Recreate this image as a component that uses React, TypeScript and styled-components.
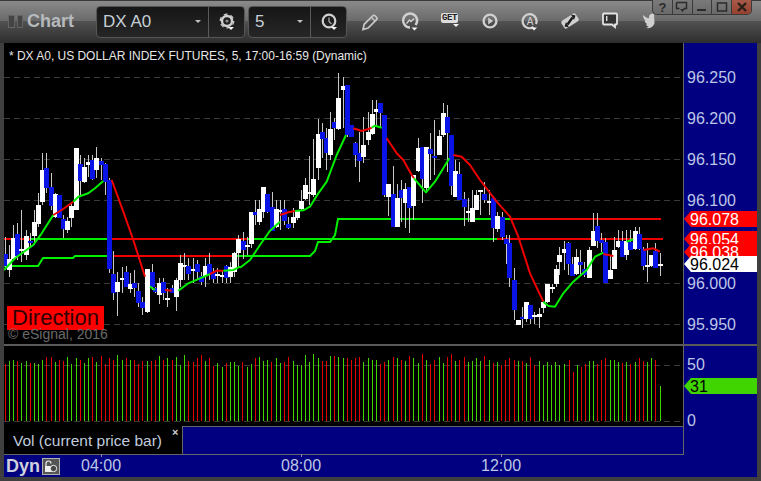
import React from "react";
import styled, { createGlobalStyle } from "styled-components";

const FONT = `"Liberation Sans", Arial, sans-serif`;
const AXIS_TEXT = "#bcc6e6";
const NAVY = "#000080";
const RULE = "#666666";

const Global = createGlobalStyle`
  html, body { margin: 0; padding: 0; background: #3c3c3c; overflow: hidden; }
  #root { width: 761px; height: 481px; }
`;

const Windowed = styled.div`
  position: relative;
  width: 761px;
  height: 481px;
  display: flex;
  flex-direction: column;
  background: #3f3f3f;
  font-family: ${FONT};
`;

const TitleBar = styled.header`
  height: 43px;
  flex: none;
  display: flex;
  align-items: center;
  background: linear-gradient(
    #3a3a3a 0,
    #3a3a3a 1px,
    #8a8a8a 1px,
    #6a6a6a 21px,
    #525252 21px,
    #2d2d2d 43px
  );
`;

const Grip = styled.div`
  width: 15px;
  margin-left: 8px;
  display: flex;
  gap: 2px;
`;

const GripBar = styled.span`
  width: 5px;
  height: 11px;
  border: 1px solid #646464;
  background: #444444;
`;

const AppName = styled.div`
  margin-left: 4px;
  width: 69px;
  font-size: 18px;
  font-weight: bold;
  color: #b6babd;
`;

const Combo = styled.div<{ $w: number; $split: number }>`
  width: ${(p) => p.$w}px;
  height: 32px;
  box-sizing: border-box;
  margin-right: 3px;
  display: grid;
  grid-template-columns: ${(p) => p.$split}px 1fr;
  border: 1px solid #565656;
  border-radius: 4px;
  background: linear-gradient(#161616, #262626);
`;

const ComboField = styled.div`
  display: flex;
  align-items: center;
  justify-content: space-between;
  padding: 0 7px 0 6px;
  border-right: 1px solid #5a5a5a;
  font-size: 17px;
  color: #c6ced6;
`;

const ComboCaret = styled.span`
  width: 0;
  height: 0;
  border-left: 3px solid transparent;
  border-right: 3px solid transparent;
  border-top: 3px solid #c0c0c0;
`;

const ComboIcon = styled.div`
  display: flex;
  align-items: center;
  justify-content: center;
`;

const IconSlot = styled.div`
  width: 40px;
  height: 24px;
  flex: none;
  display: flex;
  justify-content: center;
  position: relative;
`;

const GetBadge = styled.span`
  position: absolute;
  left: 11px;
  top: 3px;
  width: 17px;
  height: 10px;
  border-radius: 2px;
  background: #dcdcdc;
  color: #222;
  font: bold 9px/10px "Liberation Mono", monospace;
  text-align: center;
  letter-spacing: -0.4px;
`;

const WindowControls = styled.div`
  position: absolute;
  top: 0;
  left: 652px;
  width: 100px;
  height: 15px;
  box-sizing: border-box;
  display: flex;
  border: 1px solid #3a3a3a;
  border-top: 0;
  border-radius: 0 0 5px 5px;
  overflow: hidden;
  background: linear-gradient(#7a7a7a, #6a6a6a);
`;

const WindowButton = styled.div<{ $close?: boolean }>`
  flex: 1;
  display: flex;
  align-items: center;
  justify-content: center;
  border-left: 1px solid #3a3a3a;
  font-size: 13px;
  font-weight: bold;
  color: #2b2b2b;
  background: ${(p) => (p.$close ? "linear-gradient(#a85a48, #96402f)" : "transparent")};
  &:first-child {
    border-left: 0;
  }
`;

const Body = styled.main`
  flex: 1;
  display: flex;
  flex-direction: column;
  padding: 0 4px 4px;
`;

const PriceRow = styled.section`
  height: 301px;
  flex: none;
  display: flex;
`;

const Plot = styled.div`
  position: relative;
  width: 679px;
  flex: none;
  background: #000;
  svg {
    display: block;
  }
`;

const PlotTitle = styled.div`
  position: absolute;
  left: 5px;
  top: 6px;
  font-size: 12px;
  line-height: 14px;
  letter-spacing: -0.02px;
  color: #e6e6e6;
  white-space: nowrap;
`;

const Direction = styled.div`
  position: absolute;
  left: 3px;
  top: 263px;
  width: 97px;
  height: 24px;
  background: #ff0000;
  color: #300000;
  font-size: 22px;
  line-height: 24px;
  text-align: center;
`;

const Copyright = styled.div`
  position: absolute;
  left: 4px;
  top: 284px;
  font-size: 14px;
  line-height: 15px;
  color: #6a6a6a;
  white-space: nowrap;
`;

const Axis = styled.aside`
  position: relative;
  width: 74px;
  flex: none;
  box-sizing: border-box;
  border-left: 1px solid ${RULE};
  background: ${NAVY};
  overflow: hidden;
`;

const AxisLabel = styled.div<{ $y: number }>`
  position: absolute;
  left: 3px;
  top: ${(p) => p.$y - 9}px;
  font-size: 16px;
  line-height: 18px;
  color: ${AXIS_TEXT};
`;

const PriceTag = styled.div<{ $top: number; $h: number; $bg: string; $fg: string }>`
  position: absolute;
  left: 0;
  right: 0;
  top: ${(p) => p.$top}px;
  height: ${(p) => p.$h}px;
  padding-left: 6px;
  background: ${(p) => p.$bg};
  color: ${(p) => p.$fg};
  font-size: 16px;
  line-height: 17px;
  overflow: hidden;
  clip-path: polygon(7px 0, 100% 0, 100% 100%, 7px 100%, 0 50%);
`;

const Separator = styled.div`
  height: 2px;
  flex: none;
  background: #5a5a5a;
`;

const LowerRow = styled.section`
  height: 109px;
  flex: none;
  display: flex;
`;

const LowerLeft = styled.div`
  width: 679px;
  flex: none;
  display: flex;
  flex-direction: column;
`;

const VolPlot = styled.div`
  height: 80px;
  flex: none;
  background: #000;
  svg {
    display: block;
  }
`;

const LegendRow = styled.div`
  height: 29px;
  flex: none;
  box-sizing: border-box;
  display: flex;
  border-bottom: 1px solid ${RULE};
`;

const LegendTab = styled.div`
  width: 178px;
  flex: none;
  box-sizing: border-box;
  position: relative;
  padding: 6px 0 0 9px;
  background: #000;
  color: #c0cbdc;
  font-size: 15.5px;
  line-height: 18px;
  white-space: nowrap;
`;

const LegendClose = styled.span`
  position: absolute;
  left: 168px;
  top: 0;
  font-size: 11px;
  line-height: 12px;
  font-weight: bold;
  color: #d0d0d0;
`;

const LegendRest = styled.div`
  flex: 1;
  background: ${NAVY};
  border-top: 1px solid ${RULE};
  border-left: 1px solid ${RULE};
`;

const TimeAxis = styled.footer`
  flex: 1;
  display: flex;
  align-items: center;
  background: ${NAVY};
`;

const Dyn = styled.div`
  width: 38px;
  flex: none;
  padding-left: 2px;
  box-sizing: border-box;
  font-size: 18px;
  font-weight: bold;
  color: #cfd2dc;
`;

const LockBox = styled.div`
  width: 18px;
  height: 17px;
  flex: none;
  box-sizing: border-box;
  border: 1px solid #b0b0b0;
  background: #555;
  display: flex;
  align-items: center;
  justify-content: center;
`;

const TimeLabels = styled.div`
  margin-left: 21px;
  display: flex;
  gap: 160px;
`;

const TimeLabel = styled.div`
  position: relative;
  width: 40px;
  text-align: center;
  font-size: 16px;
  line-height: 18px;
  color: ${AXIS_TEXT};
  &::before {
    content: "";
    position: absolute;
    left: 20px;
    top: -3px;
    width: 1px;
    height: 3px;
    background: #8a8aa8;
  }
`;

/* ---------- chart data (read off the picture) ---------- */

type C = [number, number, number, number, number, "w" | "b"];

const c3: C[] = [
  [15,322,372,408,420,"b"],[27,345,388,420,440,"w"],[39,285,325,388,390,"w"],[52,280,312,378,390,"b"],
  [64,240,357,362,395,"w"],[78,300,318,375,390,"w"],[90,310,333,338,350,"b"],[103,240,276,318,345,"w"],
  [115,190,225,282,290,"w"],[127,70,120,216,225,"w"],[139,68,114,174,190,"b"],[154,130,172,228,240,"b"],
  [166,190,192,262,265,"w"],[178,195,195,263,265,"b"],[190,255,267,297,325,"b"],[202,260,273,300,310,"w"],
  [214,215,228,264,290,"w"],[229,54,54,240,240,"w"],[241,75,102,153,200,"b"],[253,85,110,156,160,"w"],
  [265,75,96,104,140,"w"],[277,75,90,147,150,"b"],[289,50,84,120,145,"w"],[304,85,94,106,150,"b"],
  [316,100,102,156,195,"b"],[328,145,150,416,430,"b"],[340,362,432,488,510,"b"],[352,425,456,486,558,"w"],
  [365,410,445,450,490,"w"],[378,408,426,470,470,"b"],[390,430,462,476,490,"w"],[403,420,460,474,500,"b"],
  [415,460,484,520,530,"b"],[427,500,516,533,555,"b"],[442,417,417,546,550,"w"],[455,403,426,470,480,"b"],
  [465,470,474,485,490,"b"],[477,445,459,494,522,"w"],[490,445,456,490,510,"b"],[502,475,504,510,530,"w"],
  [515,465,474,490,490,"b"],[529,445,450,500,542,"w"],[541,375,399,451,470,"w"],[553,370,405,410,450,"w"],
  [565,385,408,432,450,"b"],[578,385,418,422,460,"w"],[591,390,402,426,450,"b"],[603,425,438,456,465,"b"],
  [615,385,408,438,470,"w"],[628,370,402,435,450,"b"],[640,415,426,447,460,"b"],[652,415,432,437,458,"w"],
  [665,420,436,441,458,"w"],[678,405,408,443,460,"b"],[690,395,410,441,460,"w"],[703,365,370,426,440,"w"],
  [715,315,327,370,410,"w"],
];

const c4: C[] = [
  [8,500,528,555,582,"b"],[20,515,540,545,570,"w"],[34,441,441,537,548,"w"],[46,405,441,450,480,"b"],
  [58,405,432,471,480,"w"],[70,366,366,441,460,"w"],[82,387,387,441,445,"b"],[97,380,426,498,498,"b"],
  [109,405,432,486,490,"w"],[121,405,435,440,495,"w"],[133,405,432,468,480,"b"],[145,455,477,490,492,"b"],
  [159,430,456,474,490,"w"],[171,435,435,459,465,"w"],[184,375,408,432,435,"w"],[196,340,360,402,405,"w"],
  [208,272,381,386,420,"w"],[220,222,342,390,395,"w"],[234,162,207,309,345,"w"],[247,175,201,222,280,"b"],
  [258,190,219,264,315,"b"],[271,140,192,270,285,"w"],[283,160,171,190,225,"b"],[295,25,99,192,195,"w"],
  [308,37,63,75,190,"w"],[322,60,60,210,215,"b"],[334,180,180,216,216,"b"],[346,230,234,270,305,"b"],
  [358,200,264,288,350,"b"],[370,155,240,276,295,"w"],[385,140,201,225,240,"w"],[397,105,147,207,210,"w"],
  [408,105,132,140,185,"w"],[421,114,114,144,185,"b"],[433,150,150,390,395,"b"],[445,357,357,396,453,"w"],
  [459,303,388,486,486,"b"],[471,358,399,486,486,"w"],[483,345,375,400,470,"b"],[495,355,372,414,490,"w"],
  [507,366,366,429,505,"b"],[520,330,330,423,465,"w"],[534,220,249,318,320,"w"],[546,246,246,342,415,"b"],
  [558,246,246,369,380,"w"],[571,205,252,267,345,"b"],[583,165,273,279,330,"b"],[597,195,213,270,270,"w"],
  [610,115,144,210,215,"w"],[622,120,156,204,320,"b"],[634,210,210,363,390,"b"],[646,285,318,396,396,"w"],
  [658,290,327,405,405,"b"],[673,380,402,426,482,"b"],[685,400,438,444,470,"w"],[697,375,430,471,471,"w"],
  [709,375,390,435,435,"w"],[720,375,375,380,450,"w"],
];

const c5: C[] = [
  [13,5,42,60,70,"b"],[27,30,63,67,105,"w"],[40,54,54,144,187,"b"],[52,95,108,147,155,"w"],
  [65,95,111,171,180,"b"],[77,165,177,193,252,"b"],[88,165,189,293,322,"b"],[103,265,300,390,420,"b"],
  [115,420,420,435,435,"w"],[127,380,411,417,443,"b"],[139,366,366,418,425,"w"],[151,375,375,417,432,"b"],
  [163,395,405,411,432,"w"],[178,385,402,410,443,"w"],[190,366,366,384,400,"w"],[202,312,312,366,368,"w"],
  [215,312,321,325,340,"w"],[227,255,267,312,322,"w"],[238,200,225,246,285,"w"],[252,183,207,218,270,"w"],
  [265,185,189,251,285,"b"],[277,230,251,288,288,"b"],[289,208,231,282,285,"w"],[301,210,246,255,288,"b"],
  [313,245,267,286,292,"b"],[327,200,210,294,295,"w"],[340,100,153,198,198,"w"],[352,100,138,183,205,"b"],
  [364,160,180,190,215,"b"],[376,175,186,309,309,"b"],[391,225,270,297,297,"w"],[403,170,210,267,267,"w"],
  [415,150,183,201,205,"w"],[427,153,183,231,231,"b"],[439,150,183,225,240,"w"],[451,150,186,209,209,"b"],
  [465,140,153,207,210,"w"],[478,140,162,208,210,"b"],[490,200,207,258,270,"b"],[502,190,255,260,305,"w"],
  [514,225,225,258,260,"w"],[526,190,213,264,264,"b"],[540,220,253,257,288,"w"],
];

type CandleAbs = { x: number; wt: number; bt: number; bb: number; wb: number; k: "w" | "b" };

const place = (rows: C[], ox: number, oy: number): CandleAbs[] =>
  rows.map(([x, wt, bt, bb, wb, k]) => ({
    x: Math.round(ox + x / 3),
    wt: Math.round(oy + wt / 3),
    bt: Math.round(oy + bt / 3),
    bb: Math.round(oy + bb / 3),
    wb: Math.round(oy + wb / 3),
    k,
  }));

const candles = [...place(c3, 0, 130), ...place(c4, 240, 65), ...place(c5, 480, 180)];

const pts = (ox: number, oy: number, list: number[][]) =>
  list.map(([x, y]) => `${(ox + x / 3).toFixed(1)},${(oy + y / 3).toFixed(1)}`).join(" ");

const GREEN = "#00f000";
const RED = "#f00000";

const maSegments: [string, string][] = [
  [GREEN, pts(0, 130, [[12,420],[45,385],[100,345],[125,310],[160,255]])],
  [RED, pts(0, 130, [[160,255],[185,240],[220,215]])],
  [GREEN, pts(0, 130, [[220,215],[235,200],[265,190],[285,175],[310,153]])],
  [RED, pts(0, 130, [[335,150],[370,245],[400,330],[435,440]])],
  [GREEN, pts(0, 130, [[450,470],[465,480]])],
  [RED, pts(0, 130, [[495,480],[515,482]])],
  [GREEN, pts(0, 130, [[535,482],[565,460],[600,445],[630,432]])],
  [RED, pts(0, 130, [[630,432],[650,422],[670,422]])],
  [GREEN, pts(0, 130, [[670,422],[700,420],[720,410]])],
  [GREEN, pts(240, 65, [[0,608],[30,585],[60,540],[90,497],[120,470]])],
  [RED, pts(240, 65, [[120,450],[145,442],[165,438]])],
  [GREEN, pts(240, 65, [[165,438],[190,436],[210,425],[235,385],[260,350],[290,270],[318,210]])],
  [RED, pts(240, 65, [[340,190],[365,198],[385,192],[395,188]])],
  [GREEN, pts(240, 65, [[395,188],[405,182],[425,188]])],
  [RED, pts(240, 65, [[440,220],[470,265],[490,285],[515,330],[522,340]])],
  [GREEN, pts(240, 65, [[522,340],[558,382],[585,350],[610,310],[628,280]])],
  [RED, pts(240, 65, [[640,270],[665,275],[690,300],[720,345]])],
  [RED, pts(480, 180, [[0,0],[50,65],[90,110],[115,170],[150,280],[190,365]])],
  [GREEN, pts(480, 180, [[190,365],[205,378],[225,380],[250,340],[280,305],[320,270],[345,230],[370,218]])],
  [RED, pts(480, 180, [[370,222],[400,228]])],
  [GREEN, pts(480, 180, [[440,185],[460,178]])],
  [RED, pts(480, 180, [[490,210],[520,205],[540,215]])],
];

const stepLines: [string, string][] = [
  [GREEN, "4,266 38,266 43,258 73,258 75,256 107,256"],
  [GREEN, "232,256 310,256 315,251 318,242 330,242 335,235 338,219 510,219"],
];

const levels: [string, number, number, number][] = [
  [RED, 510, 661, 218],
  [RED, 4, 30, 238],
  [GREEN, 30, 107, 238],
  [RED, 107, 247, 238],
  [GREEN, 247, 497, 238],
  [RED, 497, 663, 238],
  [RED, 113, 232, 255],
];

const priceGrid = [77, 118, 159, 200, 283, 324];

type V = [number, number, "g" | "r"];
const v6: V[] = [
  [16,72,"r"],[28,63,"g"],[40,60,"g"],[52,63,"r"],[64,69,"g"],[78,63,"g"],[91,69,"r"],[103,69,"g"],[115,72,"g"],
  [127,60,"g"],[139,51,"r"],[154,51,"r"],[166,66,"g"],[178,60,"r"],[190,63,"r"],[202,51,"g"],[214,72,"g"],[229,54,"g"],
  [241,60,"r"],[253,69,"g"],[265,54,"g"],[277,51,"r"],[289,66,"g"],[304,48,"r"],[316,72,"r"],[328,54,"r"],[340,60,"r"],
  [352,45,"g"],[367,60,"g"],[379,54,"r"],[391,60,"g"],[403,60,"r"],[415,72,"r"],[427,63,"r"],[442,63,"g"],[453,63,"r"],
  [465,60,"r"],[478,48,"g"],[490,60,"r"],[502,54,"g"],[515,60,"r"],[529,51,"g"],[541,75,"g"],[553,45,"g"],[565,63,"r"],
  [578,66,"r"],[591,54,"r"],[603,45,"r"],[615,63,"g"],[628,54,"r"],[640,78,"r"],[652,69,"g"],[667,81,"g"],[679,69,"r"],
  [690,66,"g"],[703,66,"g"],[715,78,"g"],[727,66,"r"],[742,81,"g"],[754,72,"g"],[766,54,"r"],[778,51,"g"],[790,63,"g"],
  [802,60,"g"],[814,66,"r"],[829,54,"g"],[841,69,"g"],[853,66,"r"],[865,51,"r"],[880,63,"g"],[892,75,"g"],
];
const v8: V[] = [
  [19,45,"g"],[31,15,"g"],[43,36,"g"],[55,12,"g"],[70,24,"g"],[82,33,"r"],[94,33,"r"],[106,18,"g"],[118,18,"r"],
  [130,21,"g"],[145,24,"g"],[157,24,"r"],[169,30,"r"],[181,24,"r"],[193,21,"r"],[205,36,"g"],[220,24,"g"],[232,30,"g"],
  [244,30,"g"],[256,42,"r"],[268,36,"r"],[280,30,"g"],[295,21,"r"],[307,24,"g"],[319,30,"r"],[331,33,"g"],[343,18,"r"],
  [355,24,"g"],[370,39,"g"],[382,12,"r"],[394,30,"g"],[406,42,"r"],[418,30,"r"],[433,21,"g"],[445,39,"g"],[457,21,"r"],
  [469,12,"r"],[481,33,"g"],[493,30,"r"],[508,21,"r"],[520,36,"g"],[532,33,"g"],[544,24,"g"],[556,33,"g"],[568,18,"r"],
  [583,30,"g"],[595,39,"r"],[607,36,"g"],[619,45,"r"],[631,30,"r"],[643,24,"r"],[658,30,"r"],[670,33,"g"],[682,33,"r"],
  [694,39,"g"],[706,21,"r"],[718,45,"r"],[733,33,"g"],[745,45,"g"],[757,36,"g"],[769,45,"g"],[781,36,"g"],[793,45,"g"],
  [808,42,"g"],
];
const v7: V[] = [
  [26,60,"r"],[38,96,"r"],[50,75,"g"],[62,81,"r"],[74,72,"r"],[88,63,"g"],[100,63,"g"],[112,72,"r"],[124,60,"r"],
  [136,54,"r"],[151,60,"g"],[163,60,"g"],[175,66,"g"],[187,69,"r"],[199,66,"g"],[211,72,"r"],[226,66,"g"],[238,54,"r"],
  [250,63,"r"],[262,66,"g"],[274,54,"g"],[286,60,"r"],[301,138,"g"],
];

const vols = [
  ...v6.map(([x, y, k]) => ({ x: Math.round(x / 3), y: Math.round(340 + y / 3), k })),
  ...v8.map(([x, y, k]) => ({ x: Math.round(295 + x / 3), y: Math.round(350 + y / 3), k })),
  ...v7.map(([x, y, k]) => ({ x: Math.round(560 + x / 3), y: Math.round(340 + y / 3), k })),
];

/* ---------- drawings ---------- */

const PriceChart = () => (
  <svg width={679} height={301} viewBox="4 43 679 301">
    {priceGrid.map((y) => (
      <line key={y} x1={4} x2={683} y1={y + 0.5} y2={y + 0.5} stroke="#3a3a3a" strokeDasharray="6 4" />
    ))}
    {levels.map(([c, a, b, y], i) => (
      <rect key={i} x={a} y={y} width={b - a} height={2} fill={c} shapeRendering="crispEdges" />
    ))}
    {stepLines.map(([c, p], i) => (
      <polyline key={i} points={p} fill="none" stroke={c} strokeWidth={2} />
    ))}
    {candles.map((c, i) => (
      <g key={i} shapeRendering="crispEdges">
        <rect x={c.x} y={c.wt} width={1} height={c.wb - c.wt} fill="#c8c8c8" />
        <rect
          x={c.x - 2}
          y={c.bt}
          width={5}
          height={Math.max(c.bb - c.bt, 2)}
          fill={c.k === "w" ? "#ffffff" : "#0a14e6"}
        />
      </g>
    ))}
    {maSegments.map(([c, p], i) => (
      <polyline key={i} points={p} fill="none" stroke={c} strokeWidth={2} strokeLinejoin="round" />
    ))}
  </svg>
);

const VolumeChart = () => (
  <svg width={679} height={80} viewBox="4 346 679 80">
    {[365, 421].map((y) => (
      <line key={y} x1={4} x2={683} y1={y + 0.5} y2={y + 0.5} stroke="#3a3a3a" strokeDasharray="6 4" />
    ))}
    {vols.map((v, i) => (
      <rect
        key={i}
        x={v.x}
        y={v.y}
        width={1}
        height={421 - v.y}
        fill={v.k === "g" ? "#40d400" : "#e80000"}
        shapeRendering="crispEdges"
      />
    ))}
  </svg>
);

const ICON = "#d0d0d0";

const Caret = ({ x, y }: { x: number; y: number }) => (
  <path d={`M${x - 3} ${y}h6l-3 3z`} fill="#f4f4f4" />
);

const GearIcon = () => (
  <svg width={24} height={24} viewBox="0 0 24 24">
    <circle cx={12} cy={11} r={5} fill="none" stroke={ICON} strokeWidth={2.4} />
    <circle cx={12} cy={11} r={6.8} fill="none" stroke={ICON} strokeWidth={1.2} strokeDasharray="4 3.1" />
    <circle cx={12} cy={11} r={1.6} fill="#8a8a8a" />
    <Caret x={16} y={17} />
  </svg>
);

const ClockIcon = () => (
  <svg width={24} height={24} viewBox="0 0 24 24">
    <circle cx={12} cy={11} r={6.3} fill="none" stroke={ICON} strokeWidth={2.2} />
    <path d="M12 7.500v4l2.500 2.500" fill="none" stroke="#a8a8a8" strokeWidth={1.3} />
    <Caret x={17} y={17} />
  </svg>
);

const PencilIcon = () => (
  <svg width={24} height={24} viewBox="0 0 24 24">
    <path
      d="M5 19.500l1.200-5.200 8.300-8.300c.8-.8 2-.8 2.800 0l1 1c.8.8.8 2 0 2.800l-8.200 8.300z"
      fill="none"
      stroke="#c8c8c8"
      strokeWidth={1.7}
    />
    <path d="M13.500 7.500l3.500 3.500" stroke="#c8c8c8" strokeWidth={1.2} />
  </svg>
);

const RefreshIcon = () => (
  <svg width={24} height={24} viewBox="0 0 24 24">
    <path
      d="M17.500 15.500A7 7 0 1 0 12 18"
      fill="none"
      stroke={ICON}
      strokeWidth={2.5}
      transform="translate(0 -0.5)"
    />
    <path d="M8.500 13.500l3-3.500 1.500 1.500 3-3" fill="none" stroke={ICON} strokeWidth={1.5} />
    <Caret x={16.5} y={17.5} />
  </svg>
);

const PlayIcon = () => (
  <svg width={24} height={24} viewBox="0 0 24 24">
    <circle cx={12} cy={11} r={6.4} fill="none" stroke={ICON} strokeWidth={2.4} />
    <path d="M10.200 7.500l5 3.500-5 3.500z" fill="#cccccc" />
  </svg>
);

const AutoIcon = () => (
  <svg width={24} height={24} viewBox="0 0 24 24">
    <path d="M15.500 17.500A7 7 0 1 1 18 14.500" fill="none" stroke={ICON} strokeWidth={2.2} transform="translate(0 -0.5)" />
    <text x={12} y={15} textAnchor="middle" fontSize={10} fontFamily={FONT} fill={ICON}>
      A
    </text>
    <Caret x={16} y={17.5} />
  </svg>
);

const DiamondIcon = () => (
  <svg width={24} height={24} viewBox="0 0 24 24">
    <rect x={3.5} y={6.5} width={17} height={9} rx={2} fill={ICON} transform="rotate(-33 12 11)" />
    <path d="M13 4.500l4.500 1-1.500 4.500zM11 17.500l-4.500-1 1.500-4.500z" fill="#1c1c1c" />
    <path d="M9.500 14.500l5-7" stroke="#1c1c1c" strokeWidth={2.4} />
  </svg>
);

const BubbleIcon = () => (
  <svg width={24} height={24} viewBox="0 0 24 24">
    <path
      d="M6 4.500h12a1 1 0 0 1 1 1v9a1 1 0 0 1-1 1h-1v2.500l-3-2.500H6a1 1 0 0 1-1-1v-9a1 1 0 0 1 1-1z"
      fill="#333"
      stroke="#e4e4e4"
      strokeWidth={1.8}
      transform="translate(0 -1)"
    />
    <rect x={8} y={6} width={1.4} height={5} fill="#e4e4e4" />
  </svg>
);

const BirdIcon = () => (
  <svg width={24} height={24} viewBox="0 0 24 24">
    <path
      d="M5 5c2 2 4 3 6 3.200-.4-2 .6-4 3-4.700l2 .5.500 9c-.5 2.500-3 5-6.500 5.200l-2-.2c1.500-.5 2.200-1 2.600-1.500-1.500-.3-2.300-1-2.600-2l1.300-.2C7.500 13 6.700 12 6.600 10.500l1.200.3C6 9.500 5 7.500 5 5z"
      fill="#cfcfcf"
    />
  </svg>
);

const RestoreGlyph = () => (
  <svg width={14} height={12} viewBox="0 0 14 12">
    <path d="M1.500 1.500h10v6h-3M1.500 1.500v6h3" fill="none" stroke="#2b2b2b" strokeWidth={1.5} />
    <path d="M5 8h5l-2.500 3z" fill="#2b2b2b" />
  </svg>
);

const MinGlyph = () => (
  <svg width={12} height={12} viewBox="0 0 12 12">
    <rect x={1} y={8} width={9} height={2} fill="#2b2b2b" />
  </svg>
);

const MaxGlyph = () => (
  <svg width={12} height={12} viewBox="0 0 12 12">
    <rect x={1.5} y={2} width={9} height={8} fill="none" stroke="#2b2b2b" strokeWidth={1.5} />
  </svg>
);

const CloseGlyph = () => (
  <svg width={12} height={12} viewBox="0 0 12 12">
    <path d="M2 2l8 8M10 2l-8 8" stroke="#2b2018" strokeWidth={2.4} />
  </svg>
);

const LockGlyph = () => (
  <svg width={14} height={13} viewBox="0 0 14 13">
    <path d="M2 6V3.500a2.500 2.500 0 0 1 5 0" fill="none" stroke="#eee" strokeWidth={1.2} />
    <rect x={1} y={6} width={7} height={6} fill="#eee" />
    <circle cx={9.5} cy={8.5} r={3.2} fill="#444" stroke="#eee" />
  </svg>
);

export default function App() {
  return (
    <Windowed>
      <Global />
      <TitleBar>
        <Grip>
          <GripBar />
          <GripBar />
        </Grip>
        <AppName>Chart</AppName>
        <Combo $w={149} $split={112}>
          <ComboField>
            DX A0
            <ComboCaret />
          </ComboField>
          <ComboIcon>
            <GearIcon />
          </ComboIcon>
        </Combo>
        <Combo $w={99} $split={62}>
          <ComboField>
            5
            <ComboCaret />
          </ComboField>
          <ComboIcon>
            <ClockIcon />
          </ComboIcon>
        </Combo>
        <IconSlot>
          <PencilIcon />
        </IconSlot>
        <IconSlot>
          <RefreshIcon />
        </IconSlot>
        <IconSlot>
          <GetBadge>GET</GetBadge>
          <svg width={24} height={24} viewBox="0 0 24 24">
            <Caret x={18} y={14} />
          </svg>
        </IconSlot>
        <IconSlot>
          <PlayIcon />
        </IconSlot>
        <IconSlot>
          <AutoIcon />
        </IconSlot>
        <IconSlot>
          <DiamondIcon />
        </IconSlot>
        <IconSlot>
          <BubbleIcon />
        </IconSlot>
        <IconSlot>
          <BirdIcon />
        </IconSlot>
      </TitleBar>
      <WindowControls>
        <WindowButton>?</WindowButton>
        <WindowButton>
          <RestoreGlyph />
        </WindowButton>
        <WindowButton>
          <MinGlyph />
        </WindowButton>
        <WindowButton>
          <MaxGlyph />
        </WindowButton>
        <WindowButton $close>
          <CloseGlyph />
        </WindowButton>
      </WindowControls>
      <Body>
        <PriceRow>
          <Plot>
            <PriceChart />
            <PlotTitle>* DX A0, US DOLLAR INDEX FUTURES, 5, 17:00-16:59 (Dynamic)</PlotTitle>
            <Direction>Direction</Direction>
            <Copyright>© eSignal, 2016</Copyright>
          </Plot>
          <Axis>
            <AxisLabel $y={35}>96.250</AxisLabel>
            <AxisLabel $y={76}>96.200</AxisLabel>
            <AxisLabel $y={117}>96.150</AxisLabel>
            <AxisLabel $y={158}>96.100</AxisLabel>
            <AxisLabel $y={241}>96.000</AxisLabel>
            <AxisLabel $y={282}>95.950</AxisLabel>
            <PriceTag $top={168} $h={16} $bg="#ff0000" $fg="#ffffff">96.078</PriceTag>
            <PriceTag $top={188} $h={16} $bg="#ff0000" $fg="#ffffff">96.054</PriceTag>
            <PriceTag $top={201} $h={16} $bg="#ff0000" $fg="#ffffff">96.038</PriceTag>
            <PriceTag $top={213} $h={16} $bg="#ffffff" $fg="#000000">96.024</PriceTag>
          </Axis>
        </PriceRow>
        <Separator />
        <LowerRow>
          <LowerLeft>
            <VolPlot>
              <VolumeChart />
            </VolPlot>
            <LegendRow>
              <LegendTab>
                Vol (current price bar)
                <LegendClose>×</LegendClose>
              </LegendTab>
              <LegendRest />
            </LegendRow>
          </LowerLeft>
          <Axis>
            <AxisLabel $y={19}>50</AxisLabel>
            <AxisLabel $y={75}>0</AxisLabel>
            <PriceTag $top={32} $h={16} $bg="#40d400" $fg="#000000">31</PriceTag>
          </Axis>
        </LowerRow>
        <TimeAxis>
          <Dyn>Dyn</Dyn>
          <LockBox>
            <LockGlyph />
          </LockBox>
          <TimeLabels>
            <TimeLabel>04:00</TimeLabel>
            <TimeLabel>08:00</TimeLabel>
            <TimeLabel>12:00</TimeLabel>
          </TimeLabels>
        </TimeAxis>
      </Body>
    </Windowed>
  );
}
